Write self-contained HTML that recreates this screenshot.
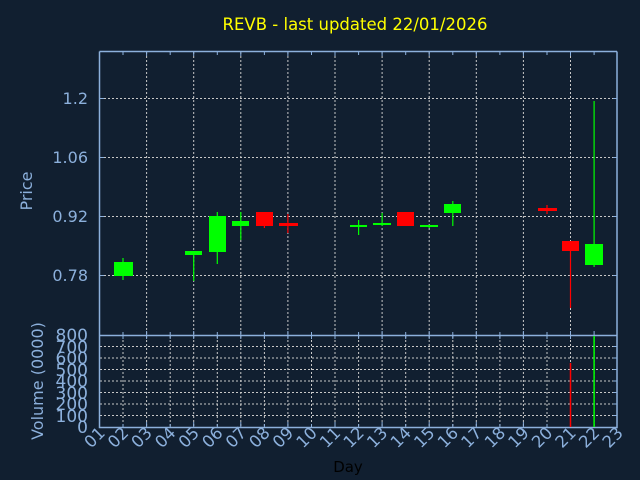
<!DOCTYPE html>
<html><head><meta charset="utf-8"><style>
html,body{margin:0;padding:0;background:#111f30;}
svg{display:block;font-family:"DejaVu Sans","Liberation Sans",sans-serif;}
</style></head><body>
<svg width="640" height="480" viewBox="0 0 640 480" xmlns="http://www.w3.org/2000/svg">
<rect width="640" height="480" fill="#111f30"/>
<text x="355" y="30" fill="#ffff00" font-size="16.5" text-anchor="middle">REVB - last updated 22/01/2026</text>
<g stroke="#c8c8c8" stroke-width="1" stroke-dasharray="2,2" fill="none">
<path d="M146.6 52V334M193.7 52V334M240.8 52V334M287.9 52V334M335 52V334M382.1 52V334M429.2 52V334M476.3 52V334M523.4 52V334M570.5 52V334"/>
<path d="M100 98.5H617M100 157.5H617M100 216.5H617M100 275.5H617"/>
<path d="M123 336V427M146.6 336V427M170.2 336V427M193.7 336V427M217.3 336V427M240.8 336V427M264.4 336V427M287.9 336V427M311.5 336V427M335 336V427M358.6 336V427M382.1 336V427M405.7 336V427M429.2 336V427M452.8 336V427M476.3 336V427M499.9 336V427M523.4 336V427M547 336V427M570.5 336V427M594.1 336V427"/>
<path d="M100 346.5H617M100 358H617M100 369.5H617M100 381H617M100 392.5H617M100 404H617M100 415.5H617"/>
</g>
<g stroke="#8cb0dc" stroke-width="1.5" fill="none">
<path d="M99.5 51.5H617M99.5 51.5V427.5H617V51.5M99.5 335.5H617"/>
</g>
<g stroke="#8cb0dc" stroke-width="1" fill="none">
<path d="M146.6 52v4M193.7 52v4M240.8 52v4M287.9 52v4M335 52v4M382.1 52v4M429.2 52v4M476.3 52v4M523.4 52v4M570.5 52v4
M123 52v3M170.2 52v3M217.3 52v3M264.4 52v3M311.5 52v3M358.6 52v3M405.7 52v3M452.8 52v3M499.9 52v3M547 52v3M594.1 52v3"/>
<path d="M146.6 335v-4M193.7 335v-4M240.8 335v-4M287.9 335v-4M335 335v-4M382.1 335v-4M429.2 335v-4M476.3 335v-4M523.4 335v-4M570.5 335v-4M594.1 335v-4
M123 335v-3M170.2 335v-3M217.3 335v-3M264.4 335v-3M311.5 335v-3M358.6 335v-3M405.7 335v-3M452.8 335v-3M499.9 335v-3M547 335v-3
M123 336v3M146.6 336v3M170.2 336v3M193.7 336v3M217.3 336v3M240.8 336v3M264.4 336v3M287.9 336v3M311.5 336v3M335 336v3M358.6 336v3M382.1 336v3M405.7 336v3M429.2 336v3M452.8 336v3M476.3 336v3M499.9 336v3M523.4 336v3M547 336v3M570.5 336v3M594.1 336v3"/>
<path d="M123 427v-3M146.6 427v-5M170.2 427v-3M193.7 427v-5M217.3 427v-3M240.8 427v-5M264.4 427v-3M287.9 427v-5M311.5 427v-3M335 427v-5M358.6 427v-3M382.1 427v-5M405.7 427v-3M429.2 427v-5M452.8 427v-3M476.3 427v-5M499.9 427v-3M523.4 427v-5M547 427v-3M570.5 427v-5M594.1 427v-3"/>
<path d="M100 98.5h4M100 157.5h4M100 216.5h4M100 275.5h4M617 98.5h-4M617 157.5h-4M617 216.5h-4M617 275.5h-4"/>
<path d="M617 346.5h-4M617 358h-4M617 369.5h-4M617 381h-4M617 392.5h-4M617 404h-4M617 415.5h-4"/>
</g>
<g fill="#8cb0dc" font-size="16" text-anchor="end">
<text x="88" y="104">1.2</text><text x="88" y="163">1.06</text><text x="88" y="222">0.92</text><text x="88" y="281">0.78</text>
</g>
<g fill="#8cb0dc" font-size="17" text-anchor="end">
<text x="88" y="341">800</text><text x="88" y="353">700</text><text x="88" y="364">600</text><text x="88" y="376">500</text><text x="88" y="387">400</text><text x="88" y="399">300</text><text x="88" y="410">200</text><text x="88" y="422">100</text><text x="88" y="433">0</text>
</g>
<text transform="translate(32,191) rotate(-90)" fill="#8cb0dc" font-size="16" text-anchor="middle">Price</text>
<text transform="translate(43,381) rotate(-90)" fill="#8cb0dc" font-size="16" text-anchor="middle">Volume (0000)</text>
<g fill="#8cb0dc" font-size="16.5" text-anchor="end">
<text transform="translate(106,434) rotate(-45)">01</text>
<text transform="translate(129.5,434) rotate(-45)">02</text>
<text transform="translate(153,434) rotate(-45)">03</text>
<text transform="translate(176.7,434) rotate(-45)">04</text>
<text transform="translate(200.2,434) rotate(-45)">05</text>
<text transform="translate(223.8,434) rotate(-45)">06</text>
<text transform="translate(247.3,434) rotate(-45)">07</text>
<text transform="translate(270.9,434) rotate(-45)">08</text>
<text transform="translate(294.4,434) rotate(-45)">09</text>
<text transform="translate(318,434) rotate(-45)">10</text>
<text transform="translate(341.5,434) rotate(-45)">11</text>
<text transform="translate(365.1,434) rotate(-45)">12</text>
<text transform="translate(388.6,434) rotate(-45)">13</text>
<text transform="translate(412.2,434) rotate(-45)">14</text>
<text transform="translate(435.7,434) rotate(-45)">15</text>
<text transform="translate(459.3,434) rotate(-45)">16</text>
<text transform="translate(482.8,434) rotate(-45)">17</text>
<text transform="translate(506.4,434) rotate(-45)">18</text>
<text transform="translate(529.9,434) rotate(-45)">19</text>
<text transform="translate(553.5,434) rotate(-45)">20</text>
<text transform="translate(577,434) rotate(-45)">21</text>
<text transform="translate(600.6,434) rotate(-45)">22</text>
<text transform="translate(624.1,434) rotate(-45)">23</text>
</g>
<text x="348" y="472" fill="#000000" font-size="15" text-anchor="middle">Day</text>
<g stroke="#00ff00" stroke-width="1.2">
<path d="M123 258V280M193.7 251V281M217.3 212V264M240.8 212V240M358.6 220V235M382.1 213V226M429.2 225V228M452.8 201V226M594.1 101V267"/>
</g>
<g fill="#00ff00">
<rect x="114" y="262" width="19" height="14"/>
<rect x="185" y="251" width="17" height="4"/>
<rect x="209" y="216" width="17" height="36"/>
<rect x="232" y="221" width="17" height="5"/>
<rect x="350" y="225" width="17" height="2"/>
<rect x="373" y="223" width="18" height="2"/>
<rect x="420" y="225" width="18" height="2"/>
<rect x="444" y="204" width="17" height="9"/>
<rect x="585" y="244" width="18" height="21"/>
</g>
<g stroke="#ff0000" stroke-width="1.2">
<path d="M264.4 212V228M287.9 214V233M405.7 212V226M547 205V214M570.5 242V308"/>
</g>
<g fill="#ff0000">
<rect x="256" y="212" width="17" height="14"/>
<rect x="279" y="223" width="19" height="3"/>
<rect x="397" y="212" width="17" height="14"/>
<rect x="538" y="208" width="19" height="3"/>
<rect x="562" y="241" width="17" height="10"/>
</g>
<path d="M570.5 427V363" stroke="#ff0000" stroke-width="1.5"/>
<path d="M594.1 427V336" stroke="#00ff00" stroke-width="1.5"/>
</svg>
</body></html>
